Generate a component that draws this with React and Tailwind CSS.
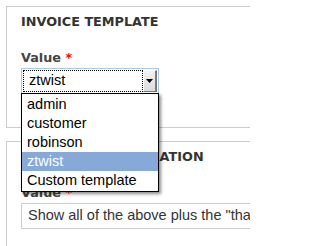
import React from 'react';

const options = ['admin', 'customer', 'robinson', 'ztwist', 'Custom template'];

function Fieldset({ title, children, className = '' }) {
  return (
    <div className={`w-[400px] border border-[#cccccc] pl-[14px] pt-[7px] ${className}`}>
      <h2 className="text-[12.8px] leading-[16px] font-bold text-[#333333] font-['DejaVu_Sans',sans-serif] whitespace-nowrap">
        {title}
      </h2>
      {children}
    </div>
  );
}

function Label() {
  return (
    <div className="mt-[20px] mb-[2px] text-[12.8px] leading-[16px] font-bold text-[#444444] font-['DejaVu_Sans',sans-serif]">
      Value <span className="text-[#ff0000]">*</span>
    </div>
  );
}

export default function App() {
  const selected = 'ztwist';

  return (
    <div className="relative w-[250px] h-[246px] overflow-hidden bg-white pl-[6px] pt-[6px] font-['Liberation_Sans',Arial,sans-serif]">
      {/* Invoice template */}
      <Fieldset title="INVOICE TEMPLATE" className="h-[122px]">
        <Label />
        <div className="flex h-[26px] w-[138px] border border-[#a6c8ea] bg-white p-[1px]">
          <div className="flex flex-1 items-center border border-dotted border-black pl-[5px] text-[14.5px] text-black">
            {selected}
          </div>
          <div className="flex w-[14px] items-center justify-center border-r-2 border-b border-t border-l border-t-white border-l-white border-r-[#7a7a7a] border-b-[#7a7a7a] bg-gradient-to-b from-[#f2f2f2] to-[#dcdcdc]">
            <svg width="7" height="4" viewBox="0 0 7 4">
              <path d="M0 0h7L3.5 4z" fill="#000" />
            </svg>
          </div>
        </div>
      </Fieldset>

      {/* Invoice configuration */}
      <Fieldset title="INVOICE CONFIGURATION" className="mt-[13px] h-[140px]">
        <Label />
        <div className="flex h-[26px] items-center border border-[#cccccc] pl-[6px] text-[14.5px] text-[#333333] whitespace-nowrap">
          Show all of the above plus the "thank you" message.
        </div>
      </Fieldset>

      {/* Open dropdown list */}
      <ul className="absolute left-[21px] top-[93px] w-[138px] border border-black bg-white py-[1px] shadow-[2px_2px_3px_rgba(0,0,0,0.45)]">
        {options.map((opt) => (
          <li
            key={opt}
            className={`h-[19px] pl-[5px] text-[14.5px] leading-[19px] ${
              opt === selected ? 'bg-[#86a9d8] text-white' : 'text-black'
            }`}
          >
            {opt}
          </li>
        ))}
      </ul>
    </div>
  );
}
